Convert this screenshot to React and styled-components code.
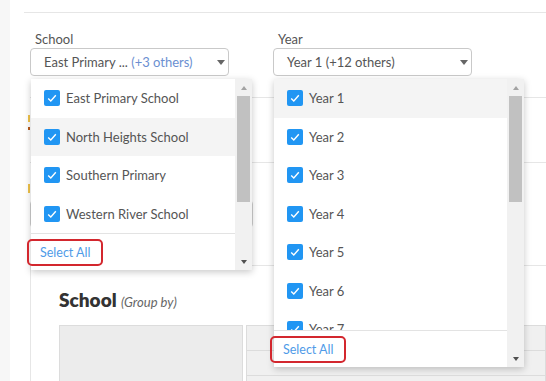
import styled, { createGlobalStyle } from 'styled-components'

const GlobalStyle = createGlobalStyle`
  html, body { margin: 0; padding: 0; background: #fff; }
  body { font-family: Lato, "Open Sans", sans-serif; }
`

const schools = ['East Primary School', 'North Heights School', 'Southern Primary', 'Western River School']
const years = ['Year 1', 'Year 2', 'Year 3', 'Year 4', 'Year 5', 'Year 6', 'Year 7']

const Check = () => (
  <svg width="12" height="12" viewBox="0 0 12 12">
    <path d="M2.2 6.4 L4.8 8.9 L9.8 3.2" fill="none" stroke="#fff" strokeWidth="1.4" />
  </svg>
)

const Dropdown = ({ items, active, width, listHeight }) => (
  <Panel $width={width}>
    <PanelBody>
      <List $height={listHeight}>
        {items.map((item, i) => (
          <Row key={item} $active={i === active}>
            <Box><Check /></Box>
            {item}
          </Row>
        ))}
      </List>
      <Footer>
        <SelectAll>Select All</SelectAll>
      </Footer>
    </PanelBody>
    <Scroll>
      <Arrow $up />
      <Thumb />
      <Arrow />
    </Scroll>
  </Panel>
)

const App = () => {
  return (
    <>
      <GlobalStyle />
      <Shell>
        <Gutter />
        <Main>
          <TopRule />
          <Filters>
            <FilterGroup>
              <Label>School</Label>
              <SelectBox>
                East Primary ...&nbsp;<Others>(+3 others)</Others>
                <Caret />
              </SelectBox>
              <Dropdown items={schools} active={1} width={221} listHeight={154} />
            </FilterGroup>
            <FilterGroup>
              <Label>Year</Label>
              <SelectBox>
                Year 1 (+12 others)
                <Caret />
              </SelectBox>
              <Dropdown items={years} active={0} width={250} listHeight={251} />
            </FilterGroup>
          </Filters>
          <Band>
            <Mark $color="#f0c34a" $top={17} $h={7} />
            <Mark $color="#b85a1c" $top={5} $h={3} />
          </Band>
          <Mark $color="#f0c34a" $top={21} $h={9} $outside />
          <SearchBox />
          <Card>
            <CardTitle>School <GroupBy>(Group by)</GroupBy></CardTitle>
            <Table>
              <GroupCell />
              <Cells>
                <Cell />
                <Cell />
                <Cell />
              </Cells>
            </Table>
          </Card>
        </Main>
      </Shell>
    </>
  )
}

export default App

const Shell = styled.div`
  display: flex;
  height: 381px;
  overflow: hidden;
`
const Gutter = styled.div`
  flex: none;
  width: 10px;
  background: #f7f7f7;
`
const Main = styled.div`
  flex: 1;
  min-width: 0;
`
const TopRule = styled.div`
  height: 12px;
  margin-left: 14px;
  border-bottom: 1px solid #e6e6e6;
`
const Filters = styled.div`
  display: flex;
  gap: 44px;
  padding: 18px 0 0 20px;
`
const FilterGroup = styled.div`
  position: relative;
  width: 199px;
  z-index: 5;
`
const Label = styled.div`
  font-size: 13px;
  line-height: 16px;
  color: #555;
  padding-left: 5px;
  margin-bottom: 1px;
`
const SelectBox = styled.div`
  box-sizing: border-box;
  height: 28px;
  display: flex;
  align-items: center;
  padding: 0 3px 0 13px;
  border: 1px solid #c9c9c9;
  border-radius: 4px;
  font-size: 13px;
  color: #555;
  white-space: nowrap;
`
const Others = styled.span`
  color: #6b8fd1;
`
const Caret = styled.span`
  margin-left: auto;
  border-left: 4px solid transparent;
  border-right: 4px solid transparent;
  border-top: 5px solid #666;
`
const Panel = styled.div`
  position: absolute;
  top: calc(100% + 3px);
  left: 1px;
  width: ${p => p.$width}px;
  display: flex;
  background: #fff;
  box-shadow: 0 2px 7px rgba(0, 0, 0, 0.22);
`
const PanelBody = styled.div`
  flex: 1;
  min-width: 0;
  display: flex;
  flex-direction: column;
`
const List = styled.div`
  height: ${p => p.$height}px;
  overflow: hidden;
`
const Row = styled.div`
  height: 38.5px;
  display: flex;
  align-items: center;
  padding-left: 13px;
  background: ${p => (p.$active ? '#f4f4f4' : 'transparent')};
  font-size: 13px;
  color: #555;
`
const Box = styled.span`
  flex: none;
  width: 16px;
  height: 16px;
  margin-right: 6px;
  border-radius: 2px;
  background: #2196f3;
  display: flex;
  align-items: center;
  justify-content: center;
`
const Footer = styled.div`
  height: 36px;
  display: flex;
  align-items: center;
  padding-left: 9px;
  border-top: 1px solid #e3e3e3;
`
const SelectAll = styled.span`
  position: relative;
  font-size: 12.5px;
  color: #4f9be8;
  &::after {
    content: '';
    position: absolute;
    inset: -6px -13px -6px -13px;
    border: 2px solid #d3272e;
    border-radius: 5px;
  }
`
const Scroll = styled.div`
  flex: none;
  width: 17px;
  background: #f1f1f1;
  display: flex;
  flex-direction: column;
  align-items: center;
`
const Arrow = styled.div`
  height: 17px;
  width: 17px;
  display: flex;
  align-items: center;
  justify-content: center;
  margin-top: ${p => (p.$up ? '0' : 'auto')};
  &::before {
    content: '';
    border-left: 3.5px solid transparent;
    border-right: 3.5px solid transparent;
    ${p => (p.$up ? 'border-bottom: 4px solid #a3a3a3;' : 'border-top: 4px solid #505050;')}
  }
`
const Thumb = styled.div`
  width: 13px;
  height: 106px;
  background: #c1c1c1;
`
const Band = styled.div`
  margin: 21px 0 0 20px;
  height: 64px;
  border-top: 1px solid #e6e6e6;
  border-bottom: 1px solid #e6e6e6;
  display: flex;
  flex-direction: column;
`
const Mark = styled.div`
  width: 2px;
  height: ${p => p.$h}px;
  margin: ${p => p.$top}px 0 0 ${p => (p.$outside ? 18 : -2)}px;
  background: ${p => p.$color};
`
const SearchBox = styled.div`
  margin: 7px 0 0 20px;
  width: 223px;
  height: 28px;
  box-sizing: border-box;
  border: 1px solid #cfcfcf;
  border-radius: 4px;
`
const Card = styled.div`
  margin: 37px 0 0 20px;
  padding: 23px 0 0 28px;
  border: 1px solid #e6e6e6;
  border-right: none;
  height: 200px;
`
const CardTitle = styled.div`
  font-size: 19px;
  line-height: 22px;
  font-weight: 800;
  color: #333;
  margin-bottom: 12px;
`
const GroupBy = styled.span`
  font-size: 13px;
  font-weight: 400;
  font-style: italic;
  color: #666;
`
const Table = styled.div`
  display: grid;
  grid-template-columns: 184px 1fr;
  gap: 3px;
`
const GroupCell = styled.div`
  height: 80px;
  background: #ececec;
  border: 1px solid #dcdcdc;
`
const Cells = styled.div`
  display: flex;
  flex-direction: column;
`
const Cell = styled.div`
  height: 24px;
  background: #f0f0f0;
  border: 1px solid #dcdcdc;
  border-top: none;
  &:first-child { border-top: 1px solid #dcdcdc; }
`
